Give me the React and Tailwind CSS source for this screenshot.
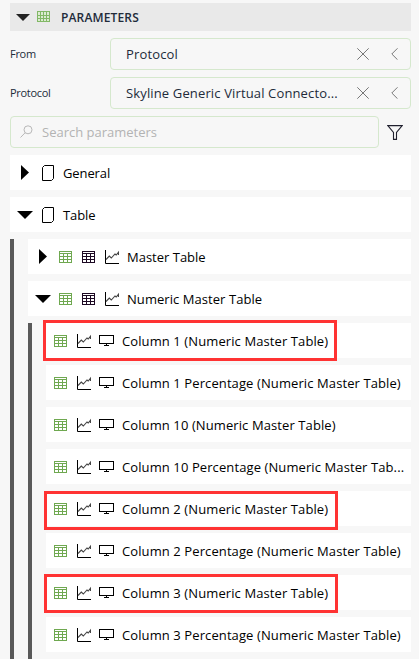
import React from 'react';

function Grid({ className = '', color = '#6fa850' }) {
  return (
    <svg className={`block h-[13px] w-[13px] shrink-0 ${className}`} viewBox="0 0 13 13" fill="none" stroke={color} shapeRendering="crispEdges">
      <path d="M.5 .5h12v11h-12zM.5 2.5h12M.5 5.5h12M.5 8.5h12M4.5 2.5v9M8.5 2.5v9" />
    </svg>
  );
}

function Chart({ className = '' }) {
  return (
    <svg className={`block h-[14px] w-[14px] shrink-0 ${className}`} viewBox="0 0 14 14" fill="none">
      <path d="M.5 0v13.5H14" stroke="#000" />
      <path d="M1 9.500L4.300 6l2 2L10 4l1.200 1L13.500 2.300V5" stroke="#444" strokeWidth="1.1" />
    </svg>
  );
}

function Monitor({ className = '' }) {
  return (
    <svg className={`block h-[11px] w-[15px] shrink-0 ${className}`} viewBox="0 0 15 11" fill="none" stroke="#000" shapeRendering="crispEdges">
      <path d="M.5 .5h14v8H.5zM7.500 8.500v2M5 10.500h5" />
    </svg>
  );
}

function Page() {
  return (
    <svg className="block h-4 w-[13px] shrink-0" viewBox="0 0 13 16" fill="none" stroke="#000">
      <path d="M2.500 .5h9v13l-2 2h-9V2.500z" />
    </svg>
  );
}

function Caret({ open }) {
  return (
    <span className="flex w-4 shrink-0 justify-center">
      {open ? (
        <svg className="block h-2 w-4" viewBox="0 0 16 8"><path d="M0 0h16L8 8z" /></svg>
      ) : (
        <svg className="block h-[15px] w-2" viewBox="0 0 8 15"><path d="M0 0l8 7.500L0 15z" /></svg>
      )}
    </span>
  );
}

function Field({ label, value, track }) {
  return (
    <div className="flex h-8 items-center">
      <span className="w-[100px] shrink-0 text-[11px] tracking-[-0.3px] text-[#222b3a]">{label}</span>
      <div className="flex h-8 flex-1 items-center rounded-[4px] border border-[#d5e8cd] pl-[15px] text-[#222b3a]">
        <span className={`w-[231px] whitespace-nowrap ${track}`}>{value}</span>
        <svg className="block h-3 w-3" viewBox="0 0 12 12" stroke="#777" fill="none"><path d="M.3 .3l11.400 11.400M11.700 .3L.3 11.700" /></svg>
        <svg className="ml-[22px] block h-3 w-[7px]" viewBox="0 0 7 12" stroke="#777" fill="none"><path d="M6.500 .3L.8 6l5.700 5.700" /></svg>
      </div>
    </div>
  );
}

function Group({ label, open }) {
  return (
    <div className="flex h-[35px] shrink-0 items-center bg-white pl-[7px]">
      <Caret open={open} />
      <span className="ml-[9px] mt-px"><Page /></span>
      <span className="ml-2 mt-px tracking-[-0.1px]">{label}</span>
    </div>
  );
}

function TableRow({ label, open, track }) {
  return (
    <div className="flex h-[35px] shrink-0 items-center bg-white pl-[7px]">
      <Caret open={open} />
      <Grid className="ml-2 mt-[2px]" />
      <Grid className="ml-[10px] mt-[2px]" color="#1c0822" />
      <Chart className="ml-[10px] mt-px" />
      <span className={`ml-2 mt-px ${track}`}>{label}</span>
    </div>
  );
}

const columns = [
  { label: 'Column 1 (Numeric Master Table)', box: '-left-[3px] -top-[3px] h-[41px]' },
  { label: 'Column 1 Percentage (Numeric Master Table)' },
  { label: 'Column 10 (Numeric Master Table)' },
  { label: 'Column 10 Percentage (Numeric Master Tab...' },
  { label: 'Column 2 (Numeric Master Table)', box: '-left-[2px] h-[39px] top-0' },
  { label: 'Column 2 Percentage (Numeric Master Table)' },
  { label: 'Column 3 (Numeric Master Table)', box: '-left-[2px] h-[39px] -top-px' },
  { label: 'Column 3 Percentage (Numeric Master Table)' },
];

function ColumnRow({ label, box }) {
  return (
    <div className="relative flex h-[35px] shrink-0 items-center bg-white pl-2">
      <Grid className="mt-[2px]" />
      <Chart className="ml-[10px] mt-px" />
      <Monitor className="ml-2" />
      <span className="ml-2 mt-px whitespace-nowrap tracking-[0.1px]">{label}</span>
      {box && <div className={`absolute w-[294px] border-[3px] border-[#ff3333] ${box}`} />}
    </div>
  );
}

export default function App() {
  return (
    <div className="flex h-[659px] w-[419px] flex-col gap-[7px] overflow-hidden bg-[#f7f7f7] pl-[10px] pr-2 pt-[3px] font-['Open_Sans','Noto_Sans',sans-serif] text-[13px] leading-[18px] text-black">
      <div className="flex h-7 shrink-0 items-center bg-[#e9e9e9] pl-[6px]">
        <svg className="block h-[7px] w-[14px]" viewBox="0 0 14 7" fill="#222"><path d="M0 0h14L7 7z" /></svg>
        <svg className="mb-[2px] ml-[7px] block h-[11px] w-[13px]" viewBox="0 0 13 11" shapeRendering="crispEdges">
          <path fill="#dcebd2" d="M0 0h13v11H0z" />
          <path d="M0 .5h13M.5 0v11M12.500 0v11M3.500 1v10M6.500 1v10M9.500 1v10M0 4.500h13M0 7.500h13M0 10.500h13" stroke="#82b866" />
        </svg>
        <span className="ml-[11px] mt-[2px] text-[12px] font-semibold tracking-[0.15px] text-[#222b3a]">PARAMETERS</span>
      </div>
      <Field label="From" value="Protocol" track="tracking-[0.15px]" />
      <Field label="Protocol" value="Skyline Generic Virtual Connecto..." track="tracking-[0.14px]" />
      <div className="flex h-8 shrink-0 items-center">
        <div className="flex h-8 w-[369px] items-center rounded-[4px] border border-[#d5e8cd] pl-[9px] text-[#b3b3b3]">
          <svg className="mb-px block h-[13px] w-[13px]" viewBox="0 0 13 13" fill="none" stroke="#b8b8b8"><circle cx="8" cy="4.800" r="4" /><path d="M5.200 7.700L.5 12.500" /></svg>
          <span className="ml-[9px]">Search parameters</span>
        </div>
        <svg className="ml-2 block h-[15px] w-4" viewBox="0 0 16 15" fill="none" stroke="#20202e" strokeWidth="1.100"><path d="M.8 .6h14.400L9.500 7.500v6.900h-3V7.500z" /></svg>
      </div>
      <Group label="General" />
      <Group label="Table" open />
      <div className="flex min-h-0 flex-1">
        <div className="w-1 shrink-0 bg-[#595959]" />
        <div className="ml-[14px] flex min-w-0 flex-1 flex-col gap-[7px]">
          <TableRow label="Master Table" track="tracking-[0px]" />
          <TableRow label="Numeric Master Table" open track="tracking-[0.06px]" />
          <div className="flex min-h-0 flex-1">
            <div className="w-1 shrink-0 bg-[#595959]" />
            <div className="ml-[14px] flex min-w-0 flex-1 flex-col gap-[7px]">
              {columns.map((c) => (
                <ColumnRow key={c.label} {...c} />
              ))}
            </div>
          </div>
        </div>
      </div>
    </div>
  );
}
